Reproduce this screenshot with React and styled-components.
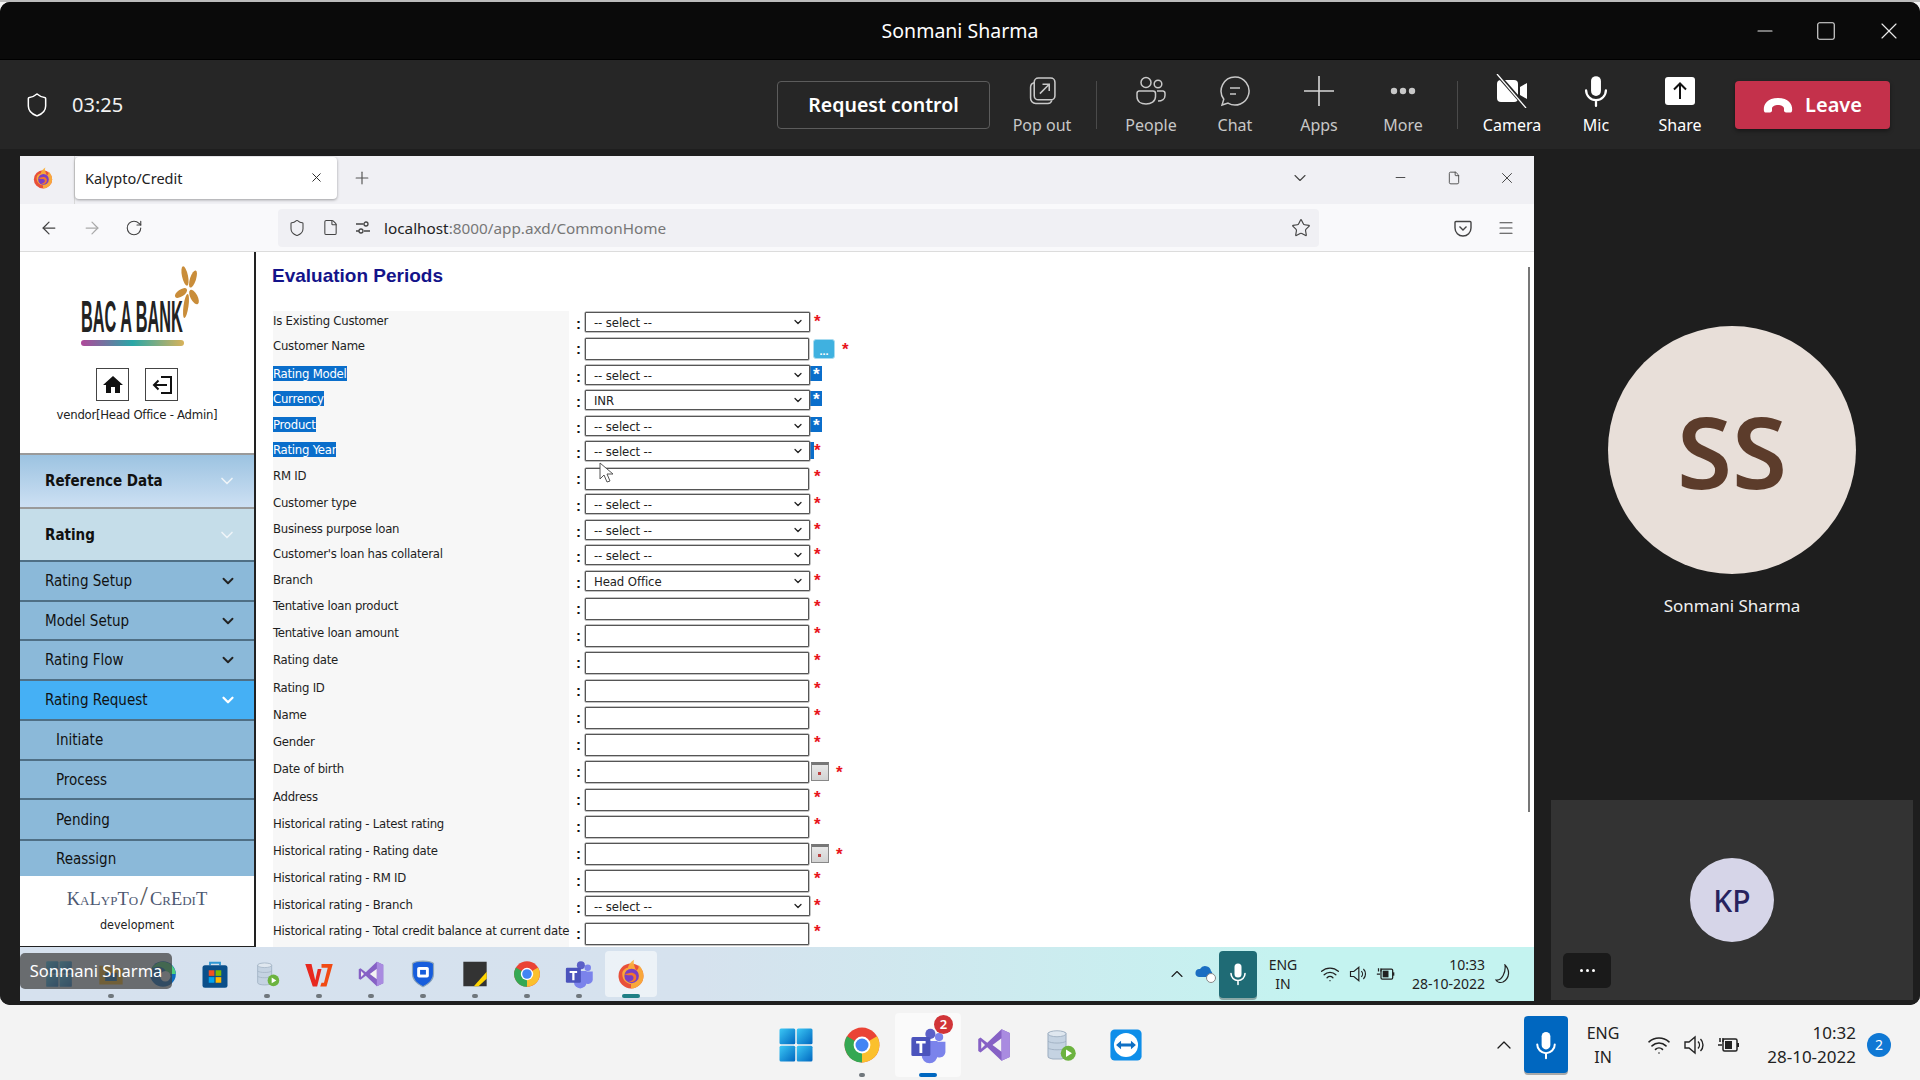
import React from 'react';
import styled, { createGlobalStyle } from 'styled-components';
import { ChevronDown, ChevronUp, ArrowLeft, ArrowRight, RotateCw, Shield, Star, Menu, Plus, X, Minus, Wifi, File, Square } from 'lucide-react';
import { MdHome } from 'react-icons/md';

const Global = createGlobalStyle`
  html, body { margin: 0; padding: 0; width: 1920px; height: 1080px; overflow: hidden; background: #f3f3f3; }
  * { box-sizing: border-box; }
`;

const UI_FONT = `"Noto Sans", "Open Sans", sans-serif`;
const FORM_FONT = `"DejaVu Sans Condensed", "DejaVu Sans", sans-serif`;

const Page = styled.div`
  width: 1920px;
  height: 1080px;
  display: flex;
  flex-direction: column;
  border-top: 2px solid #bcbcbc;
  font-family: ${UI_FONT};
  overflow: hidden;
`;

const TeamsWindow = styled.div`
  height: 1003px;
  display: flex;
  flex-direction: column;
  background: #1f1f1f;
  border-radius: 10px 10px 10px 10px;
  overflow: hidden;
`;

const TitleBar = styled.div`
  height: 57px;
  flex: none;
  background: #0a0a0a;
  color: #fff;
  font-size: 19.5px;
  display: grid;
  grid-template-columns: 1fr auto 1fr;
  align-items: center;
`;

const WinControls = styled.div`
  grid-column: 3;
  justify-self: end;
  display: flex;
  align-items: center;
  gap: 38px;
  padding-right: 17px;
  color: #e8e8e8;
`;

const Toolbar = styled.div`
  height: 90px;
  flex: none;
  background: #262626;
  border-top: 1px solid #000;
  display: flex;
  align-items: center;
  padding: 0 30px 0 24px;
  color: #fff;
`;

const Timer = styled.span`
  font-size: 20px;
  margin-left: 22px;
  color: #f2f2f2;
`;

const RequestButton = styled.button`
  margin-left: auto;
  width: 213px;
  height: 48px;
  background: #262626;
  border: 1px solid #5c5c5c;
  border-radius: 4px;
  color: #fff;
  font: 600 19.5px ${UI_FONT};
`;

const ToolItem = styled.div`
  width: ${p => p.$w || 84}px;
  height: 64px;
  margin-left: ${p => p.$ml || 0}px;
  display: flex;
  flex-direction: column;
  align-items: center;
  justify-content: flex-start;
  color: ${p => (p.$on ? '#fff' : '#c8c8c8')};
  font-size: 16px;
  line-height: 22px;
  flex: none;
`;

const ToolIcon = styled.div`
  height: 36px;
  margin-bottom: 5px;
  display: flex;
  align-items: center;
  justify-content: center;
`;

const Divider = styled.div`
  width: 1px;
  height: 48px;
  background: #4a4a4a;
  flex: none;
  margin: 0 12px;
`;

const LeaveButton = styled.button`
  width: 155px;
  height: 48px;
  margin-left: 13px;
  background: #c4314b;
  border: 0;
  border-radius: 4px;
  color: #fff;
  font: 600 20px ${UI_FONT};
  display: flex;
  align-items: center;
  justify-content: center;
  gap: 12px;
  box-shadow: 0 2px 4px rgba(0, 0, 0, 0.4);
`;

const Stage = styled.div`
  flex: 1;
  display: flex;
  padding: 7px 0 4px 20px;
  background: #1e1e1e;
  min-height: 0;
`;

const Shared = styled.div`
  width: 1514px;
  height: 845px;
  flex: none;
  display: flex;
  flex-direction: column;
  background: #fff;
  position: relative;
`;

const TabBar = styled.div`
  height: 48px;
  flex: none;
  background: #f0f0f4;
  display: flex;
  align-items: center;
  padding-bottom: 5px;
  color: #333;
`;

const FoxSlot = styled.div`
  width: 55px;
  height: 48px;
  margin-bottom: -5px;
  display: flex;
  align-items: center;
  justify-content: center;
  padding: 0 8px 4px 0;
  border-right: 1px solid #d8d8d8;
`;

const Tab = styled.div`
  width: 262px;
  height: 42px;
  margin-left: 0;
  background: #fff;
  border-radius: 4px;
  box-shadow: 0 1px 3px rgba(0, 0, 0, 0.35);
  display: flex;
  align-items: center;
  justify-content: space-between;
  padding: 0 13px 0 10px;
  font-size: 14.5px;
  color: #222;
`;

const NewTab = styled.div`
  margin-left: 15px;
  display: flex;
  color: #555;
`;

const BrowserCtl = styled.div`
  margin-left: auto;
  display: flex;
  align-items: center;
  padding-right: 18px;
  color: #444;
`;

const NavBar = styled.div`
  height: 48px;
  flex: none;
  background: #f9f9fb;
  border-bottom: 1px solid #dcdcdc;
  display: flex;
  align-items: center;
  color: #444;
  padding-left: 19px;
`;

const NavBtn = styled.div`
  width: 43px;
  display: flex;
  color: ${p => (p.$off ? '#aaa' : '#444')};
`;

const UrlBar = styled.div`
  width: 1041px;
  height: 38px;
  margin-left: 110px;
  background: #f0f0f4;
  border-radius: 4px;
  display: flex;
  align-items: center;
  padding: 0 8px 0 10px;
  gap: 16px;
  font-size: 15.3px;
  color: #777;
`;

const UrlText = styled.span`
  margin-left: -3px;
  b { font-weight: 400; color: #222; }
`;

const UrlEnd = styled.div`
  margin-left: auto;
  display: flex;
`;

const NavEnd = styled.div`
  margin-left: auto;
  display: flex;
  align-items: center;
  gap: 25px;
  padding-right: 19px;
`;

const Content = styled.div`
  flex: 1;
  display: flex;
  min-height: 0;
  position: relative;
  overflow: hidden;
`;

const Sidebar = styled.div`
  width: 236px;
  flex: none;
  border-right: 2px solid #222;
  border-bottom: 1px solid #222;
  display: flex;
  flex-direction: column;
  font-family: ${FORM_FONT};
`;

const LogoArea = styled.div`
  height: 201px;
  flex: none;
  display: flex;
  flex-direction: column;
  align-items: center;
  padding-top: 12px;
`;

const IconRow = styled.div`
  display: flex;
  gap: 16px;
  margin-top: 14px;
`;

const SquareBtn = styled.div`
  width: 33px;
  height: 33px;
  border: 1px solid #444;
  display: flex;
  align-items: center;
  justify-content: center;
  color: #111;
`;

const Vendor = styled.div`
  font-size: 13px;
  margin-top: 6px;
  color: #222;
  letter-spacing: -0.25px;
`;

const NavRow = styled.div`
  height: ${p => p.$h || 40}px;
  flex: none;
  display: flex;
  align-items: center;
  justify-content: space-between;
  padding: 0 17px 0 ${p => (p.$sub ? 36 : 25)}px;
  font-size: 15px;
  font-weight: ${p => (p.$head ? 700 : 400)};
  color: #111;
  background: ${p => p.$bg || '#8bb9d9'};
  border-top: ${p => (p.$head ? '2px solid #9a9a9a' : '2px solid #4f6f85')};
`;

const Credit = styled.div`
  flex: 1;
  background: #fff;
  display: flex;
  flex-direction: column;
  align-items: center;
  padding-top: 7px;
`;

const CreditLogo = styled.div`
  font-family: "Liberation Serif", serif;
  font-variant: small-caps;
  font-size: 18.5px;
  line-height: 26px;
  color: #4d5872;
  i { font-style: normal; font-size: 28px; font-weight: 400; color: #5a5a5a; margin: 0 2px; }
`;

const CreditSub = styled.div`
  font-size: 12.5px;
  color: #222;
  margin-top: 5px;
`;

const Main = styled.div`
  flex: 1;
  padding: 0 0 0 17px;
  font-family: ${FORM_FONT};
  min-width: 0;
`;

const Heading = styled.h1`
  margin: 0;
  height: 59px;
  padding-top: 12px;
  margin-left: -1px;
  font: 700 19px/24px "Liberation Sans", sans-serif;
  color: #13138a;
`;

const Row = styled.div`
  height: ${p => p.$h}px;
  display: grid;
  grid-template-columns: 296px 16px 225px auto;
  font-size: 13px;
`;

const LabelCell = styled.div`
  background: #f7f7f7;
  padding-top: 2px;
  line-height: 16px;
  color: #1e1e1e;
  white-space: nowrap;
  letter-spacing: -0.25px;
  em {
    font-style: normal;
    color: #fff;
    background: #0a6ecb;
    display: inline-block;
    line-height: 15px;
  }
`;

const Colon = styled.div`
  font: 700 15px/18px "Liberation Sans", sans-serif;
  color: #111;
  padding: 4px 0 0 7px;
`;

const SelectWrap = styled.div`
  position: relative;
  height: 20px;
  margin-top: 1px;
`;

const SelectField = styled.select`
  width: 100%;
  height: 100%;
  appearance: none;
  border: 1px solid #555;
  border-radius: 1px;
  background: #fff;
  padding: 0 0 0 8px;
  font: 13px ${FORM_FONT};
  letter-spacing: -0.1px;
  color: #222;
  outline: none;
  box-shadow: 0 0 0 0.5px #888;
`;

const SelectChevron = styled(ChevronDown)`
  position: absolute;
  right: 6px;
  top: 4px;
  color: #222;
`;

const TextField = styled.input`
  display: block;
  width: 224px;
  height: 22px;
  margin-top: 2px;
  border: 1px solid #555;
  border-radius: 1px;
  background: #fff;
  outline: none;
  box-shadow: 0 0 0 0.5px #888;
`;

const After = styled.div`
  display: flex;
  align-items: flex-start;
  height: 100%;
`;

const Star2 = styled.span`
  font: 700 17px/17px "Liberation Sans", sans-serif;
  color: ${p => (p.$sel ? '#fff' : '#e8141c')};
  background: ${p => (p.$sel ? '#0a6ecb' : 'transparent')};
  height: ${p => (p.$sel ? '15px' : 'auto')};
  margin-left: ${p => (p.$ml !== undefined ? p.$ml : 5)}px;
  margin-top: ${p => (p.$mt !== undefined ? p.$mt : 2)}px;
  padding-left: ${p => (p.$sel ? '3px' : 0)};
  display: block;
  min-width: ${p => (p.$sel ? '12px' : 0)};
`;

const SelStub = styled.span`
  width: 4px;
  height: 17px;
  margin-top: 2px;
  background: #0a6ecb;
`;

const PickButton = styled.div`
  width: 22px;
  height: 20px;
  margin: 3px 0 0 3px;
  background: #3fb1e0;
  border: 1px solid #a9dcf0;
  border-radius: 3px;
  color: #fff;
  font: 700 11px/22px "Liberation Sans", sans-serif;
  text-align: center;
`;

const CalButton = styled.div`
  width: 18px;
  height: 19px;
  margin: 3px 0 0 1px;
  background: linear-gradient(#e8e8e8, #d2d2d2);
  border: 1px solid #888;
  border-top: 3px solid #777;
  position: relative;
  &::after {
    content: '';
    position: absolute;
    left: 6px;
    top: 7px;
    width: 3px;
    height: 3px;
    background: #b44;
  }
`;

const ScrollThumb = styled.div`
  position: absolute;
  right: 4px;
  top: 15px;
  width: 2px;
  height: 545px;
  background: #777;
`;

const Pointer = styled.svg`
  position: absolute;
  left: 579px;
  top: 210px;
`;

const WinTaskbar = styled.div`
  height: 54px;
  flex: none;
  background: linear-gradient(90deg, #d6e1ee 0%, #d6e2ee 45%, #c4f3f0 85%, #c4f3f0 100%);
  display: flex;
  align-items: center;
  padding-left: 13px;
  position: relative;
  color: #1c1c1c;
`;

const AppCell = styled.div`
  width: ${p => p.$w || 52}px;
  height: ${p => (p.$w ? 64 : 46)}px;
  display: flex;
  align-items: center;
  justify-content: center;
  position: relative;
  border-radius: 4px;
  background: ${p => (p.$active ? 'rgba(255,255,255,0.55)' : 'transparent')};
  &::after {
    content: '';
    display: ${p => (p.$dot ? 'block' : 'none')};
    position: absolute;
    bottom: ${p => (p.$w ? 0 : -1)}px;
    left: 50%;
    transform: translateX(-50%);
    width: ${p => (p.$active ? 18 : 6)}px;
    height: 4px;
    border-radius: 2px;
    background: ${p => p.$dotColor || '#70777c'};
  }
`;

const NameTag = styled.div`
  position: absolute;
  left: 0;
  top: 6px;
  width: 152px;
  height: 36px;
  z-index: 2;
  background: rgba(62, 62, 62, 0.72);
  border-radius: 5px;
  color: #fff;
  font-size: 16.5px;
  line-height: 36px;
  text-align: center;
`;

const Tray = styled.div`
  margin-left: auto;
  display: flex;
  align-items: center;
  height: 100%;
  padding-right: ${p => p.$pr || 0}px;
`;

const TrayBlock = styled.div`
  width: ${p => p.$w}px;
  height: ${p => p.$h}px;
  margin: 0 ${p => p.$mr || 0}px 0 ${p => p.$ml || 0}px;
  background: ${p => p.$bg};
  border-radius: 4px;
  display: flex;
  align-items: center;
  justify-content: center;
  color: #fff;
  box-shadow: 0 2px 0 rgba(0, 0, 0, 0.3);
`;

const TrayText = styled.div`
  width: ${p => p.$w}px;
  flex: none;
  font-size: ${p => p.$size || 14}px;
  line-height: ${p => p.$lh || 19}px;
  text-align: ${p => p.$align || 'center'};
  color: #222;
  white-space: nowrap;
  margin-left: ${p => p.$ml || 0}px;
`;

const TrayIcon = styled.div`
  width: ${p => p.$w || 28}px;
  flex: none;
  display: flex;
  justify-content: center;
  margin-left: ${p => p.$ml || 0}px;
  color: #222;
`;

const SidePanel = styled.div`
  flex: 1;
  display: flex;
  flex-direction: column;
  align-items: center;
  padding: 170px 7px 0 17px;
  color: #fff;
`;

const BigAvatar = styled.div`
  width: 248px;
  height: 248px;
  flex: none;
  border-radius: 50%;
  background: #e8dfd9;
  color: #5c3c2b;
  font-size: 100px;
  font-weight: 600;
  display: flex;
  align-items: center;
  justify-content: center;
`;

const PresenterName = styled.div`
  margin-top: 20px;
  font-size: 17px;
  line-height: 24px;
  color: #f0f0f0;
`;

const Tile = styled.div`
  margin-top: 182px;
  width: 100%;
  height: 200px;
  flex: none;
  background: #333;
  display: flex;
  align-items: center;
  justify-content: center;
  position: relative;
`;

const SmallAvatar = styled.div`
  width: 84px;
  height: 84px;
  border-radius: 50%;
  background: #d6d5e8;
  color: #27225e;
  font-size: 30px;
  font-weight: 500;
  display: flex;
  align-items: center;
  justify-content: center;
`;

const DotsButton = styled.div`
  position: absolute;
  left: 12px;
  bottom: 12px;
  width: 48px;
  height: 35px;
  background: #1a1a1a;
  border-radius: 5px;
  display: flex;
  align-items: center;
  justify-content: center;
  gap: 3px;
  i { width: 3px; height: 3px; background: #fff; border-radius: 50%; }
`;

const OsTaskbar = styled.div`
  flex: 1;
  display: grid;
  grid-template-columns: 1fr auto 1fr;
  align-items: center;
  background: #f3f3f3;
  color: #1c1c1c;
  min-height: 0;
  padding-top: 4px;
`;

const OsApps = styled.div`
  grid-column: 2;
  display: flex;
  align-items: center;
  padding-left: 2px;
`;

const Badge = styled.div`
  width: 24px;
  height: 24px;
  border-radius: 50%;
  background: #0f78d4;
  color: #fff;
  font-size: 14px;
  line-height: 24px;
  text-align: center;
  margin-left: 11px;
  flex: none;
`;

const AppBadge = styled.div`
  position: absolute;
  top: 2px;
  right: 8px;
  width: 19px;
  height: 19px;
  border-radius: 50%;
  background: #d13438;
  color: #fff;
  font-size: 13px;
  font-weight: 600;
  line-height: 19px;
  text-align: center;
`;

/* ---- drawings ---- */
const FirefoxIcon = ({ size = 22 }) => (
  <svg width={size} height={size} viewBox="0 0 24 24">
    <circle cx="12" cy="13.500" r="10" fill="#e8503a" />
    <path d="M12 23.500a10 10 0 0 0 10-10c0-4-2-7-4-9 .6 2.400-.4 4-2 4.600C15 6 13.500 3 14.500.5 12 2 10 4.500 9.500 7 7 7.500 5 9.500 5 12c0 6 5 8 7 8z" fill="#fbb03b" opacity=".9" />
    <circle cx="12.500" cy="13.500" r="5.800" fill="#7a3fc4" />
    <path d="M7 12c2 0 3-1 5-1 3 0 5 2 4 5-1 2.500-4 3-6 2 2 0 4-1 4-3s-2-2-3-2c-2 0-3 0-4-1z" fill="#f2762e" />
  </svg>
);

const ChromeIcon = ({ size = 28 }) => (
  <svg width={size} height={size} viewBox="0 0 24 24">
    <circle cx="12" cy="12" r="11" fill="#ea4335" />
    <path d="M12 12 21.500 6.500A11 11 0 0 1 12 23z" fill="#fbc02d" />
    <path d="M12 12v11A11 11 0 0 1 2.470 6.500z" fill="#34a853" />
    <circle cx="12" cy="12" r="5.300" fill="#fff" />
    <circle cx="12" cy="12" r="4.100" fill="#4285f4" />
  </svg>
);

const VsIcon = ({ size = 28 }) => (
  <svg width={size} height={size} viewBox="0 0 24 24">
    <path d="M17 1.500 22.500 4v16L17 22.500 7.500 13.500 3 17l-1.500-1V8L3 7l4.500 3.500z" fill="#8661c5" />
    <path d="M17 7.500v9L11 12z" fill="#f3f3f3" />
    <path d="M3.500 9.500v5L6 12z" fill="#f3f3f3" />
    <path d="M17 1.500 22.500 4v16L17 22.500z" fill="#a98be0" />
  </svg>
);

const TeamsIcon = ({ size = 30 }) => (
  <svg width={size} height={size} viewBox="0 0 24 24">
    <circle cx="19" cy="7" r="2.600" fill="#7b83eb" />
    <circle cx="13.500" cy="5" r="3.200" fill="#5b5fc7" />
    <path d="M16 10h7v6.500a4 4 0 0 1-7 2z" fill="#7b83eb" />
    <path d="M8 9.500h10v9a5 5 0 0 1-10 0z" fill="#7b83eb" />
    <rect x="1.500" y="7" width="12" height="12" rx="1" fill="#4b53bc" />
    <path d="M4.500 9.500h6v1.600H8.400V17H6.600v-5.900H4.500z" fill="#fff" />
  </svg>
);

const DbIcon = ({ size = 28 }) => (
  <svg width={size} height={size} viewBox="0 0 24 24">
    <path d="M4 4.500C4 2.500 16 2.500 16 4.500v15c0 2.500-12 2.500-12 0z" fill="#c5d3e2" stroke="#9fb0c2" strokeWidth=".7" />
    <ellipse cx="10" cy="4.500" rx="6" ry="2" fill="#dfe7ef" stroke="#9fb0c2" strokeWidth=".6" />
    <path d="M4 9.500c2 1.600 10 1.600 12 0M4 14c2 1.600 10 1.600 12 0" stroke="#9fb0c2" strokeWidth=".6" fill="none" />
    <circle cx="17.500" cy="17.500" r="5" fill="#6cb33f" />
    <path d="m16 15 4 2.500-4 2.500z" fill="#fff" />
  </svg>
);

const WindowsIcon = ({ size = 36, dim }) => (
  <svg width={size} height={size} viewBox="0 0 24 24" opacity={dim ? 0.85 : 1}>
    <defs>
      <linearGradient id="wg" x1="0" y1="0" x2="1" y2="1">
        <stop offset="0" stopColor="#3cc8f5" />
        <stop offset="1" stopColor="#0067c0" />
      </linearGradient>
    </defs>
    <rect x="1" y="1" width="10.500" height="10.500" rx="1" fill="url(#wg)" />
    <rect x="12.500" y="1" width="10.500" height="10.500" rx="1" fill="url(#wg)" />
    <rect x="1" y="12.500" width="10.500" height="10.500" rx="1" fill="url(#wg)" />
    <rect x="12.500" y="12.500" width="10.500" height="10.500" rx="1" fill="url(#wg)" />
  </svg>
);

const TeamViewerIcon = ({ size = 34 }) => (
  <svg width={size} height={size} viewBox="0 0 24 24">
    <rect x="1" y="1" width="22" height="22" rx="3" fill="#0e8ee9" />
    <circle cx="12" cy="12" r="8.500" fill="#fff" />
    <path d="M5 12l3.500-3v2h7V9l3.500 3-3.500 3v-2h-7v2z" fill="#0e6fc4" />
  </svg>
);

const AppIcons = {
  explorer: (
    <svg width="28" height="28" viewBox="0 0 24 24">
      <path d="M2 5h8l2 2h10v14H2z" fill="#f0b429" />
      <rect x="7" y="11" width="10" height="7" fill="#1a73b8" />
    </svg>
  ),
  edge: (
    <svg width="28" height="28" viewBox="0 0 24 24">
      <circle cx="12" cy="12" r="11" fill="#0f6cbd" />
      <path d="M23 12a11 11 0 0 0-21-4c3-3 10-3 12 1 1 2-1 3-1 3h10z" fill="#4fd07d" />
      <circle cx="14" cy="14" r="4.500" fill="#d6e1ee" />
    </svg>
  ),
  store: (
    <svg width="30" height="30" viewBox="0 0 24 24">
      <path d="M8 5V3h8v2" stroke="#2f97d4" strokeWidth="1.500" fill="none" />
      <rect x="2" y="5" width="20" height="18" rx="2" fill="#0b4f8a" />
      <rect x="7" y="9" width="4.500" height="4.500" fill="#f25022" />
      <rect x="12.500" y="9" width="4.500" height="4.500" fill="#7fba00" />
      <rect x="7" y="14.500" width="4.500" height="4.500" fill="#00a4ef" />
      <rect x="12.500" y="14.500" width="4.500" height="4.500" fill="#ffb900" />
    </svg>
  ),
  wps: (
    <svg width="30" height="30" viewBox="0 0 24 24">
      <path d="M1 4h5l3 13 2-9h3l-3.500 14H7L1 4z" fill="#e8281f" />
      <path d="M14 4h9l-5 18h-5l1-3h2l3-12h-5z" fill="#f14a13" />
    </svg>
  ),
  bitwarden: (
    <svg width="28" height="28" viewBox="0 0 24 24">
      <path d="M12 1c4 0 8 1 9 2v9c0 6-5 9-9 11-4-2-9-5-9-11V3c1-1 5-2 9-2z" fill="#175ddc" stroke="#8fa6b8" strokeWidth="1" />
      <rect x="7" y="6" width="10" height="9" rx="1.500" fill="#fff" />
      <rect x="9.500" y="8.500" width="5" height="4" fill="#175ddc" />
    </svg>
  ),
  sticky: (
    <svg width="28" height="28" viewBox="0 0 24 24">
      <rect x="2" y="1.500" width="20" height="21" fill="#333" />
      <path d="M22 10v6l-7 6.500h-4z" fill="#ffd400" />
    </svg>
  ),
};

const MicGlyph = ({ size = 26, color = '#fff' }) => (
  <svg width={size} height={size} viewBox="0 0 24 24" fill="none" stroke={color} strokeWidth="1.600" strokeLinecap="round">
    <rect x="8.500" y="1.500" width="7" height="14" rx="3.500" fill={color} stroke="none" />
    <path d="M5 11.500a7 7 0 0 0 14 0M12 18.500v4" />
  </svg>
);

const SpeakerGlyph = ({ size = 24 }) => (
  <svg width={size} height={size} viewBox="0 0 24 24" fill="none" stroke="#222" strokeWidth="1.400">
    <path d="M3 9h4l6-5v16l-6-5H3z" />
    <path d="M16 8.500a5 5 0 0 1 0 7M18.500 6a8.500 8.500 0 0 1 0 12" />
  </svg>
);

const BatteryGlyph = ({ size = 24 }) => (
  <svg width={size} height={size} viewBox="0 0 24 24" fill="none" stroke="#222" strokeWidth="1.500">
    <rect x="6" y="6" width="14" height="12" rx="1.500" />
    <rect x="8" y="8" width="7" height="8" fill="#222" stroke="none" />
    <path d="M21 10v4" strokeWidth="2" />
    <path d="M1 12h4M3 5v4M6 5v4" />
  </svg>
);

const PopOutIcon = () => (
  <svg width="29" height="29" viewBox="0 0 28 28" fill="none" stroke="#c8c8c8" strokeWidth="1.500">
    <rect x="6" y="2" width="20" height="21" rx="4" />
    <path d="M6 6.500A4.500 4.500 0 0 0 2.500 11v10a5 5 0 0 0 5 5.500H19a4 4 0 0 0 4-3" />
    <path d="M11.500 17 20 8.500M14 8h6.500v6.500" />
  </svg>
);

const PeopleIcon = () => (
  <svg width="32" height="32" viewBox="0 0 32 32" fill="none" stroke="#c8c8c8" strokeWidth="1.500">
    <circle cx="11" cy="7.500" r="5" />
    <circle cx="23" cy="9" r="3.800" />
    <path d="M4 16h14a2.500 2.500 0 0 1 2.500 2.500v3c0 5-4.500 7.500-9.500 7.500S2 26.500 2 21.500v-3A2.500 2.500 0 0 1 4 16z" />
    <path d="M22 16h6a2.500 2.500 0 0 1 2 2.500v2c0 3.500-3 5.500-7 5.500" />
  </svg>
);

const ChatIcon = () => (
  <svg width="32" height="32" viewBox="0 0 32 32" fill="none" stroke="#c8c8c8" strokeWidth="1.500">
    <path d="M16 2a14 14 0 1 1-7 26.100L3 30l1.800-5.800A14 14 0 0 1 16 2z" />
    <path d="M11 13h10M11 19h6" />
  </svg>
);

const PlusIcon = () => (
  <svg width="30" height="30" viewBox="0 0 30 30" stroke="#d8d8d8" strokeWidth="1.600">
    <path d="M15 0v30M0 15h30" />
  </svg>
);

const MoreIcon = () => (
  <svg width="28" height="8" viewBox="0 0 28 8" fill="#c8c8c8">
    <circle cx="5" cy="4" r="3.200" />
    <circle cx="14" cy="4" r="3.200" />
    <circle cx="23" cy="4" r="3.200" />
  </svg>
);

const CameraOffIcon = () => (
  <svg width="32" height="34" viewBox="0 0 32 34" fill="#fff">
    <rect x="1" y="6" width="21" height="22" rx="4" />
    <path d="M24 13l7-4v16l-7-4z" />
    <path d="M2 1l28 32" stroke="#262626" strokeWidth="4" />
    <path d="M1 0l29 34" stroke="#fff" strokeWidth="1.300" />
  </svg>
);

const ShareIcon = () => (
  <svg width="30" height="30" viewBox="0 0 30 30">
    <rect x="0" y="1" width="30" height="28" rx="3" fill="#fff" />
    <path d="M15 23V8M9 13.500 15 7.500l6 6" stroke="#111" strokeWidth="2" fill="none" />
  </svg>
);

const HangupIcon = () => (
  <svg width="30" height="16" viewBox="0 0 30 16" fill="#fff">
    <path d="M1 14c-1-5 2-13 14-13s15 8 14 13c-.2 1-1 1.500-2 1.500h-4c-1 0-2-1-2-2v-2c0-2-3-3.500-6-3.500S9 9.500 9 11.500v2c0 1-1 2-2 2H3c-1 0-1.800-.5-2-1.500z" />
  </svg>
);

const PocketIcon = () => (
  <svg width="18" height="18" viewBox="0 0 18 18" fill="none" stroke="#444" strokeWidth="1.400">
    <path d="M2 2.500h14a1 1 0 0 1 1 1V9a8 8 0 0 1-16 0V3.500a1 1 0 0 1 1-1z" />
    <path d="m5.500 7.500 3.500 3.500 3.500-3.500" />
  </svg>
);

const SliderIcon = () => (
  <svg width="16" height="16" viewBox="0 0 16 16" fill="none" stroke="#444" strokeWidth="1.300">
    <circle cx="11" cy="4" r="2" />
    <path d="M1 4h7.500M1 11h3M9 11h6" />
    <circle cx="6" cy="11" r="2" />
  </svg>
);

const LogoutIcon = () => (
  <svg width="22" height="20" viewBox="0 0 22 20" fill="none" stroke="#111" strokeWidth="2">
    <path d="M10 2h10v16H10M16 10H4" />
    <path d="M7.500 5.500 3 10l4.500 4.500" />
  </svg>
);

const BankLogo = () => (
  <svg width="130" height="90" viewBox="0 0 130 90">
    <defs>
      <linearGradient id="rain" x1="0" x2="1" y1="0" y2="0">
        <stop offset="0" stopColor="#b0479a" />
        <stop offset=".5" stopColor="#2aa7a7" />
        <stop offset="1" stopColor="#d8b25a" />
      </linearGradient>
    </defs>
    <text transform="translate(9 68) scale(.37 1)" fontFamily="Liberation Sans, sans-serif" fontWeight="700" fontSize="44" fill="#222">BAC A BANK</text>
    <rect x="9" y="76" width="103" height="6" rx="3" fill="url(#rain)" />
    <g fill="#c98d3a">
      <ellipse cx="113" cy="12" rx="3" ry="10" transform="rotate(-12 113 12)" />
      <ellipse cx="121" cy="15" rx="3" ry="9" transform="rotate(18 121 15)" />
      <ellipse cx="109" cy="29" rx="3.500" ry="7" transform="rotate(55 109 29)" />
      <ellipse cx="122" cy="33" rx="3.500" ry="8" transform="rotate(-28 122 33)" />
      <ellipse cx="114" cy="42" rx="2.500" ry="12" transform="rotate(8 114 42)" />
    </g>
  </svg>
);

const HeaderChevron = () => <ChevronDown size={20} color="#eef4f8" strokeWidth={2} />;

const rows = [
  { h: 25, label: 'Is Existing Customer', kind: 'select' },
  { h: 28, label: 'Customer Name', kind: 'input', extra: 'pick' },
  { h: 25, label: 'Rating Model', kind: 'select', sel: true },
  { h: 26, label: 'Currency', kind: 'select', value: 'INR', sel: true },
  { h: 25, label: 'Product', kind: 'select', sel: true },
  { h: 26, label: 'Rating Year', kind: 'select', sel: 'stub' },
  { h: 27, label: 'RM ID', kind: 'input' },
  { h: 26, label: 'Customer type', kind: 'select' },
  { h: 25, label: 'Business purpose loan', kind: 'select' },
  { h: 26, label: "Customer's loan has collateral", kind: 'select' },
  { h: 26, label: 'Branch', kind: 'select', value: 'Head Office' },
  { h: 27, label: 'Tentative loan product', kind: 'input' },
  { h: 27, label: 'Tentative loan amount', kind: 'input' },
  { h: 28, label: 'Rating date', kind: 'input' },
  { h: 27, label: 'Rating ID', kind: 'input' },
  { h: 27, label: 'Name', kind: 'input' },
  { h: 27, label: 'Gender', kind: 'input' },
  { h: 28, label: 'Date of birth', kind: 'input', extra: 'cal' },
  { h: 27, label: 'Address', kind: 'input' },
  { h: 27, label: 'Historical rating - Latest rating', kind: 'input' },
  { h: 27, label: 'Historical rating - Rating date', kind: 'input', extra: 'cal' },
  { h: 27, label: 'Historical rating - RM ID', kind: 'input' },
  { h: 26, label: 'Historical rating - Branch', kind: 'select' },
  { h: 27, label: 'Historical rating - Total credit balance at current date', kind: 'input' },
];

const FormRow = ({ row }) => (
  <Row $h={row.h}>
    <LabelCell>{row.sel ? <em>{row.label}</em> : row.label}</LabelCell>
    <Colon>:</Colon>
    {row.kind === 'select' ? (
      <SelectWrap>
        <SelectField defaultValue={row.value || '-- select --'}>
          <option>{row.value || '-- select --'}</option>
        </SelectField>
        <SelectChevron size={12} strokeWidth={2.5} />
      </SelectWrap>
    ) : (
      <TextField />
    )}
    <After>
      {row.extra === 'pick' && <PickButton>...</PickButton>}
      {row.extra === 'cal' && <CalButton />}
      {row.sel === 'stub' && <SelStub />}
      <Star2
        $sel={row.sel === true}
        $ml={row.sel === true ? 0 : row.sel === 'stub' ? 0 : row.extra ? 7 : 4}
        $mt={row.extra ? 5 : 2}
      >
        *
      </Star2>
    </After>
  </Row>
);

const ToolButton = ({ label, icon, on, ml }) => (
  <ToolItem $on={on} $ml={ml}>
    <ToolIcon>{icon}</ToolIcon>
    {label}
  </ToolItem>
);

export default function App() {
  return (
    <>
      <Global />
      <Page>
        <TeamsWindow>
          <TitleBar>
            <span />
            <span>Sonmani Sharma</span>
            <WinControls>
              <Minus size={24} strokeWidth={1.1} />
              <Square size={22} strokeWidth={1.2} />
              <X size={28} strokeWidth={1} />
            </WinControls>
          </TitleBar>

          <Toolbar>
            <Shield size={26} strokeWidth={1.4} />
            <Timer>03:25</Timer>
            <RequestButton>Request control</RequestButton>
            <ToolButton label="Pop out" icon={<PopOutIcon />} ml={10} />
            <Divider />
            <ToolButton label="People" icon={<PeopleIcon />} />
            <ToolButton label="Chat" icon={<ChatIcon />} />
            <ToolButton label="Apps" icon={<PlusIcon />} />
            <ToolButton label="More" icon={<MoreIcon />} />
            <Divider />
            <ToolButton label="Camera" icon={<CameraOffIcon />} on />
            <ToolButton label="Mic" icon={<MicGlyph size={34} />} on />
            <ToolButton label="Share" icon={<ShareIcon />} on />
            <LeaveButton>
              <HangupIcon />
              Leave
            </LeaveButton>
          </Toolbar>

          <Stage>
            <Shared>
              <TabBar>
                <FoxSlot>
                  <FirefoxIcon />
                </FoxSlot>
                <Tab>
                  Kalypto/Credit
                  <X size={15} strokeWidth={1.5} />
                </Tab>
                <NewTab>
                  <Plus size={20} strokeWidth={1.4} />
                </NewTab>
                <BrowserCtl>
                  <ChevronDown size={20} strokeWidth={1.3} />
                  <Minus size={15} strokeWidth={1.5} style={{ marginLeft: 83 }} />
                  <File size={14} strokeWidth={1.5} style={{ marginLeft: 39 }} />
                  <X size={18} strokeWidth={1.3} style={{ marginLeft: 37 }} />
                </BrowserCtl>
              </TabBar>
              <NavBar>
                <NavBtn><ArrowLeft size={20} strokeWidth={1.5} /></NavBtn>
                <NavBtn $off><ArrowRight size={20} strokeWidth={1.5} /></NavBtn>
                <NavBtn><RotateCw size={18} strokeWidth={1.5} /></NavBtn>
                <UrlBar>
                  <Shield size={18} strokeWidth={1.4} color="#444" />
                  <File size={17} strokeWidth={1.5} color="#444" />
                  <SliderIcon />
                  <UrlText><b>localhost</b>:8000/app.axd/CommonHome</UrlText>
                  <UrlEnd><Star size={20} strokeWidth={1.4} color="#444" /></UrlEnd>
                </UrlBar>
                <NavEnd>
                  <PocketIcon />
                  <Menu size={18} strokeWidth={1.5} />
                </NavEnd>
              </NavBar>

              <Content>
                <Sidebar>
                  <LogoArea>
                    <BankLogo />
                    <IconRow>
                      <SquareBtn><MdHome size={24} /></SquareBtn>
                      <SquareBtn><LogoutIcon /></SquareBtn>
                    </IconRow>
                    <Vendor>vendor[Head Office - Admin]</Vendor>
                  </LogoArea>
                  <NavRow $head $h={54} $bg="linear-gradient(#9cc3e1, #cde0f3)">Reference Data <HeaderChevron /></NavRow>
                  <NavRow $head $h={53} $bg="#c5dde9">Rating <HeaderChevron /></NavRow>
                  <NavRow>Rating Setup <ChevronDown size={18} strokeWidth={2.5} color="#222" /></NavRow>
                  <NavRow $h={39}>Model Setup <ChevronDown size={18} strokeWidth={2.5} color="#222" /></NavRow>
                  <NavRow>Rating Flow <ChevronDown size={18} strokeWidth={2.5} color="#222" /></NavRow>
                  <NavRow $bg="#45b0f5">Rating Request <ChevronDown size={18} strokeWidth={3} color="#fff" /></NavRow>
                  <NavRow $sub>Initiate</NavRow>
                  <NavRow $sub $h={39}>Process</NavRow>
                  <NavRow $sub $h={41}>Pending</NavRow>
                  <NavRow $sub $h={37}>Reassign</NavRow>
                  <Credit>
                    <CreditLogo>KaLypTo<i>/</i>CrEdiT</CreditLogo>
                    <CreditSub>development</CreditSub>
                  </Credit>
                </Sidebar>

                <Main>
                  <Heading>Evaluation Periods</Heading>
                  {rows.map(row => (
                    <FormRow key={row.label} row={row} />
                  ))}
                </Main>

                <ScrollThumb />
                <Pointer width="16" height="22" viewBox="0 0 16 22" fill="#fff" stroke="#555" strokeWidth="1">
                  <path d="M1 1v16l4-4 3 7 3-1-3-7h6z" />
                </Pointer>
              </Content>

              <WinTaskbar>
                <NameTag>Sonmani Sharma</NameTag>
                <AppCell><WindowsIcon size={28} dim /></AppCell>
                <AppCell $dot>{AppIcons.explorer}</AppCell>
                <AppCell>{AppIcons.edge}</AppCell>
                <AppCell>{AppIcons.store}</AppCell>
                <AppCell $dot><DbIcon /></AppCell>
                <AppCell $dot>{AppIcons.wps}</AppCell>
                <AppCell $dot><VsIcon /></AppCell>
                <AppCell $dot>{AppIcons.bitwarden}</AppCell>
                <AppCell $dot>{AppIcons.sticky}</AppCell>
                <AppCell $dot><ChromeIcon /></AppCell>
                <AppCell $dot><TeamsIcon /></AppCell>
                <AppCell $dot $active $dotColor="#1f7f85"><FirefoxIcon size={30} /></AppCell>
                <Tray>
                  <ChevronUp size={20} strokeWidth={1.3} />
                  <TrayIcon $ml={7} $w={24}>
                    <svg width="22" height="20" viewBox="0 0 22 20">
                      <path d="M4 13a4 4 0 0 1 1-8 6 6 0 0 1 11 2 4 4 0 0 1 0 6z" fill="#1b6ec2" />
                      <circle cx="16" cy="14" r="4.500" fill="#fff" stroke="#888" />
                    </svg>
                  </TrayIcon>
                  <TrayBlock $w={38} $h={47} $bg="#1f6b75" $ml={1}><MicGlyph size={24} /></TrayBlock>
                  <TrayText $w={52} $ml={0}>ENG<br />IN</TrayText>
                  <TrayIcon $ml={7}><Wifi size={20} strokeWidth={1.6} /></TrayIcon>
                  <TrayIcon><SpeakerGlyph size={20} /></TrayIcon>
                  <TrayIcon><BatteryGlyph size={20} /></TrayIcon>
                  <TrayText $w={85} $align="right">10:33<br />28-10-2022</TrayText>
                  <TrayIcon $w={24} $ml={7}>
                    <svg width="18" height="20" viewBox="0 0 18 20" fill="none" stroke="#222" strokeWidth="1.200">
                      <path d="M10 1c5 5 5 13-2 17-3 1-6 0-7-2 6 1 10-8 9-15z" />
                    </svg>
                  </TrayIcon>
                  <TrayIcon $w={18} />
                </Tray>
              </WinTaskbar>
            </Shared>

            <SidePanel>
              <BigAvatar>SS</BigAvatar>
              <PresenterName>Sonmani Sharma</PresenterName>
              <Tile>
                <SmallAvatar>KP</SmallAvatar>
                <DotsButton><i /><i /><i /></DotsButton>
              </Tile>
            </SidePanel>
          </Stage>
        </TeamsWindow>

        <OsTaskbar>
          <OsApps>
            <AppCell $w={66}><WindowsIcon /></AppCell>
            <AppCell $w={66} $dot><ChromeIcon size={38} /></AppCell>
            <AppCell $w={66} $dot $active $dotColor="#0067c0"><TeamsIcon size={38} /><AppBadge>2</AppBadge></AppCell>
            <AppCell $w={66}><VsIcon size={36} /></AppCell>
            <AppCell $w={66}><DbIcon size={36} /></AppCell>
            <AppCell $w={66}><TeamViewerIcon /></AppCell>
          </OsApps>
          <Tray $pr={29}>
            <ChevronUp size={24} strokeWidth={1.3} />
            <TrayBlock $w={44} $h={57} $bg="#0067c0" $ml={8}><MicGlyph size={30} /></TrayBlock>
            <TrayText $w={70} $size={16} $lh={24}>ENG<br />IN</TrayText>
            <TrayIcon $ml={6} $w={30}><Wifi size={24} strokeWidth={1.6} /></TrayIcon>
            <TrayIcon $w={40}><SpeakerGlyph /></TrayIcon>
            <TrayIcon $w={30}><BatteryGlyph /></TrayIcon>
            <TrayText $w={112} $size={17} $lh={24} $align="right">10:32<br />28-10-2022</TrayText>
            <Badge>2</Badge>
          </Tray>
        </OsTaskbar>
      </Page>
    </>
  );
}
